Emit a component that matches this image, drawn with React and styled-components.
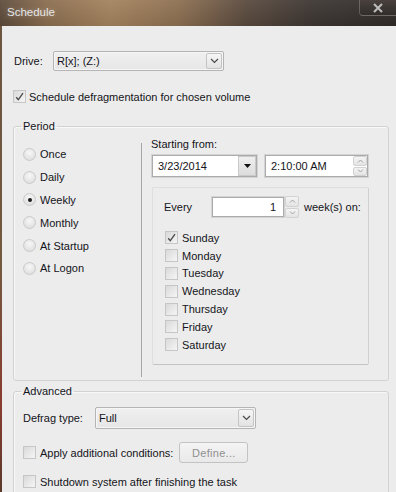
import React from "react"
import styled, { createGlobalStyle } from "styled-components"

const GlobalStyle = createGlobalStyle`
  html, body {
    margin: 0;
    padding: 0;
    background: #2e2a28;
  }
  body {
    font-family: "Liberation Sans", Arial, sans-serif;
    font-size: 11px;
    color: #141420;
  }
`

const Window = styled.div`
  width: 396px;
  height: 492px;
  overflow: hidden;
  display: flex;
  flex-direction: column;
  background: linear-gradient(180deg, #6b553f 0%, #74583e 55%, #8a3c30 82%, #5a3a2a 100%);
`
const TitleBar = styled.div`
  height: 26px;
  flex: none;
  display: flex;
  justify-content: space-between;
  align-items: flex-start;
  background:
    linear-gradient(180deg, rgba(255, 255, 255, 0.06), rgba(0, 0, 0, 0.08)),
    linear-gradient(90deg, #5e4c3c 0%, #8c6e50 12%, #a4835e 28%, #8e7052 45%, #5a4a3e 62%, #3e3733 78%, #2f2b29 100%);
`
const Title = styled.div`
  padding: 6px 0 0 7px;
  color: #e6e6e6;
  font-size: 11.5px;
  text-shadow: 0 0 5px rgba(255, 255, 255, 0.35);
`
const CloseButton = styled.div`
  width: 36px;
  height: 15px;
  margin-top: -1px;
  border: 1px solid rgba(255, 255, 255, 0.22);
  border-right: none;
  border-radius: 0 0 0 4px;
  background: linear-gradient(180deg, #48413d, #322d2b);
  display: flex;
  align-items: center;
  justify-content: center;
`
const Body = styled.div`
  flex: 1;
  min-height: 0;
  margin-left: 2px;
  background: #ececec;
  padding: 25px 7px 0 11px;
  display: flex;
  flex-direction: column;
  & > * {
    flex: none;
  }
`
const Row = styled.div`
  display: flex;
  align-items: center;
  gap: ${(p) => p.$gap || 0}px;
  margin-top: ${(p) => p.$mt || 0}px;
  height: ${(p) => (p.$h ? `${p.$h}px` : "auto")};
`
const Label = styled.span`
  width: ${(p) => (p.$w ? `${p.$w}px` : "auto")};
  margin-left: ${(p) => p.$ml || 0}px;
  flex: none;
  white-space: nowrap;
`
const Combo = styled.div`
  display: flex;
  width: ${(p) => p.$w}px;
  height: ${(p) => p.$h}px;
  box-sizing: border-box;
  border: 1px solid #b4b4b4;
  border-radius: 2px;
  background: linear-gradient(180deg, #f0f0f0, #e6e6e6);
  box-shadow: inset 0 0 0 1px #f6f6f6;
`
const ComboText = styled.div`
  flex: 1;
  padding-left: 3px;
  display: flex;
  align-items: center;
`
const ComboArrow = styled.div`
  width: 14px;
  margin: 1px;
  border: 1px solid #c4c4c4;
  border-radius: 2px;
  display: flex;
  align-items: center;
  justify-content: center;
  background: linear-gradient(180deg, #f6f6f6, #e2e2e2);
`
const Field = styled.div`
  display: flex;
  width: ${(p) => p.$w}px;
  height: ${(p) => p.$h}px;
  box-sizing: border-box;
  border: 1px solid #d4d4d4;
  box-shadow: inset 0 0 0 1px #ababab;
  background: #fff;
  padding: 1px;
`
const FieldText = styled.div`
  flex: 1;
  display: flex;
  align-items: center;
  justify-content: ${(p) => (p.$right ? "flex-end" : "flex-start")};
  padding: 0 ${(p) => (p.$right ? 7 : 0)}px 0 ${(p) => (p.$right ? 0 : 5)}px;
`
const DropButton = styled.div`
  width: 16px;
  border: 1px solid #c9c9c9;
  background: linear-gradient(180deg, #efefef, #dcdcdc);
  display: flex;
  align-items: center;
  justify-content: center;
`
const Spinner = styled.div`
  width: 14px;
  flex: none;
  display: flex;
  flex-direction: column;
  gap: 1px;
  align-self: stretch;
`
const SpinHalf = styled.div`
  flex: 1;
  border: 1px solid #d2d2d2;
  border-radius: 2px;
  background: linear-gradient(180deg, #f4f4f4, #e4e4e4);
  display: flex;
  align-items: center;
  justify-content: center;
`
const Box = styled.span`
  width: 13px;
  height: 13px;
  box-sizing: border-box;
  flex: none;
  border: 1px solid #c6c6c6;
  background: linear-gradient(135deg, #d9d9d9, #f5f5f5);
  display: inline-flex;
  align-items: center;
  justify-content: center;
`
const RadioDot = styled.span`
  width: 13px;
  height: 13px;
  box-sizing: border-box;
  flex: none;
  border-radius: 50%;
  border: 1px solid #cacaca;
  background: radial-gradient(circle at 50% 35%, #f7f7f7, #d9d9d9);
  display: inline-flex;
  align-items: center;
  justify-content: center;

  &::after {
    content: "";
    width: 4px;
    height: 4px;
    border-radius: 50%;
    background: ${(p) => (p.$on ? "#1e1e1e" : "transparent")};
  }
`
const Group = styled.fieldset`
  margin: ${(p) => p.$mt || 0}px 0 0;
  padding: 0;
  min-width: 0;
  box-sizing: border-box;
  height: ${(p) => (p.$h ? `${p.$h}px` : "auto")};
  border: 1px solid #d2d2d2;
  border-radius: 3px;
  box-shadow: inset 1px 1px #f8f8f8;
`
const Legend = styled.legend`
  margin-left: 7px;
  padding: 0 2px;
  line-height: 14px;
`
const PeriodBody = styled.div`
  display: flex;
  height: 247px;
  box-sizing: border-box;
  padding-top: 4px;
`
const RadioColumn = styled.div`
  width: 127px;
  flex: none;
  padding: 6px 0 0 9px;
  box-sizing: border-box;
  display: flex;
  flex-direction: column;
`
const RadioRow = styled.div`
  height: 22.8px;
  display: flex;
  align-items: center;
  gap: 4px;
`
const Separator = styled.div`
  width: 0;
  border-left: 1px solid #a6a6a6;
  margin: 6px 0 3px;
`
const RightColumn = styled.div`
  flex: 1;
  padding: 0 19px 0 9px;
  display: flex;
  flex-direction: column;
`
const Caption = styled.div`
  line-height: 15px;
`
const Panel = styled.div`
  margin: 9px 0 0 1px;
  height: 178px;
  box-sizing: border-box;
  border: 1px solid #dedede;
  border-bottom-color: #c3c3c3;
  border-right-color: #d0d0d0;
  border-radius: 2px;
  padding: 8px 0 0 11px;
  display: flex;
  flex-direction: column;
`
const DayList = styled.div`
  margin-top: 11px;
  display: flex;
  flex-direction: column;
`
const CheckRow = styled.div`
  height: ${(p) => p.$h || 17.8}px;
  display: flex;
  align-items: center;
  gap: ${(p) => p.$gap || 4}px;
  margin-top: ${(p) => p.$mt || 0}px;
  padding-left: ${(p) => p.$pl || 0}px;
`
const AdvancedBody = styled.div`
  padding: 9px 0 0 9px;
  display: flex;
  flex-direction: column;
  height: 120px;
`
const Button = styled.div`
  width: 69px;
  height: 21px;
  box-sizing: border-box;
  margin-left: 6px;
  border: 1px solid #c3c3c3;
  border-radius: 3px;
  background: linear-gradient(180deg, #f4f4f4, #e9e9e9);
  color: #8e8e8e;
  display: flex;
  align-items: center;
  justify-content: center;
  letter-spacing: 0.3px;
`

const Chevron = () => (
  <svg width="9" height="6" viewBox="0 0 9 6">
    <path d="M1 1 L4.5 4.5 L8 1" fill="none" stroke="#4a4a4a" strokeWidth="1.2" />
  </svg>
)
const Triangle = () => (
  <svg width="7" height="4" viewBox="0 0 7 4">
    <path d="M0 0 H7 L3.5 4 Z" fill="#111" />
  </svg>
)
const Caret = ({ up }) => (
  <svg width="7" height="4" viewBox="0 0 7 4">
    <path d={up ? "M1 3.5 L3.5 1 L6 3.5" : "M1 0.5 L3.5 3 L6 0.5"} fill="none" stroke="#a0a0a0" strokeWidth="1" />
  </svg>
)
const Tick = () => (
  <svg width="11" height="11" viewBox="0 0 11 11">
    <path d="M2.2 6.2 L4.3 8.6 L9 2.2" fill="none" stroke="#4a4a4a" strokeWidth="1.3" />
  </svg>
)

const Check = ({ on, children, ...rest }) => (
  <CheckRow {...rest}>
    <Box>{on && <Tick />}</Box>
    {children}
  </CheckRow>
)

const SpinBox = () => (
  <Spinner>
    <SpinHalf>
      <Caret up />
    </SpinHalf>
    <SpinHalf>
      <Caret />
    </SpinHalf>
  </Spinner>
)

const periods = ["Once", "Daily", "Weekly", "Monthly", "At Startup", "At Logon"]
const days = ["Sunday", "Monday", "Tuesday", "Wednesday", "Thursday", "Friday", "Saturday"]

export default function App() {
  return (
    <>
      <GlobalStyle />
      <Window>
        <TitleBar>
          <Title>Schedule</Title>
          <CloseButton>
            <svg width="12" height="10" viewBox="0 0 12 10">
              <path d="M2 1 L10 9 M10 1 L2 9" stroke="#bdbdbd" strokeWidth="2" />
            </svg>
          </CloseButton>
        </TitleBar>
        <Body>
          <Row>
            <Label $w={39} $ml={1}>Drive:</Label>
            <Combo $w={171} $h={20}>
              <ComboText>R[x]; (Z:)</ComboText>
              <ComboArrow>
                <Chevron />
              </ComboArrow>
            </Combo>
          </Row>
          <Check on $mt={19} $h={13} $gap={3}>
            Schedule defragmentation for chosen volume
          </Check>

          <Group $mt={16} $h={262}>
            <Legend>Period</Legend>
            <PeriodBody>
              <RadioColumn>
                {periods.map((p) => (
                  <RadioRow key={p}>
                    <RadioDot $on={p === "Weekly"} />
                    {p}
                  </RadioRow>
                ))}
              </RadioColumn>
              <Separator />
              <RightColumn>
                <Caption>Starting from:</Caption>
                <Row $mt={2} $gap={6}>
                  <Field $w={107} $h={24}>
                    <FieldText>3/23/2014</FieldText>
                    <DropButton>
                      <Triangle />
                    </DropButton>
                  </Field>
                  <Field $w={105} $h={24}>
                    <FieldText>2:10:00 AM</FieldText>
                    <SpinBox />
                  </Field>
                </Row>
                <Panel>
                  <Row $h={22}>
                    <Label $w={47}>Every</Label>
                    <Field $w={74} $h={22}>
                      <FieldText $right>1</FieldText>
                    </Field>
                    <SpinBox />
                    <Label $ml={5}>week(s) on:</Label>
                  </Row>
                  <DayList>
                    {days.map((d) => (
                      <Check key={d} on={d === "Sunday"} $pl={1}>
                        {d}
                      </Check>
                    ))}
                  </DayList>
                </Panel>
              </RightColumn>
            </PeriodBody>
          </Group>

          <Group $mt={3}>
            <Legend>Advanced</Legend>
            <AdvancedBody>
              <Row>
                <Label $w={72}>Defrag type:</Label>
                <Combo $w={161} $h={22}>
                  <ComboText>Full</ComboText>
                  <ComboArrow>
                    <Chevron />
                  </ComboArrow>
                </Combo>
              </Row>
              <Row $mt={13} $h={21}>
                <Check $h={21}>Apply additional conditions:</Check>
                <Button>Define...</Button>
              </Row>
              <Check $mt={12} $h={13}>
                Shutdown system after finishing the task
              </Check>
            </AdvancedBody>
          </Group>
        </Body>
      </Window>
    </>
  )
}
